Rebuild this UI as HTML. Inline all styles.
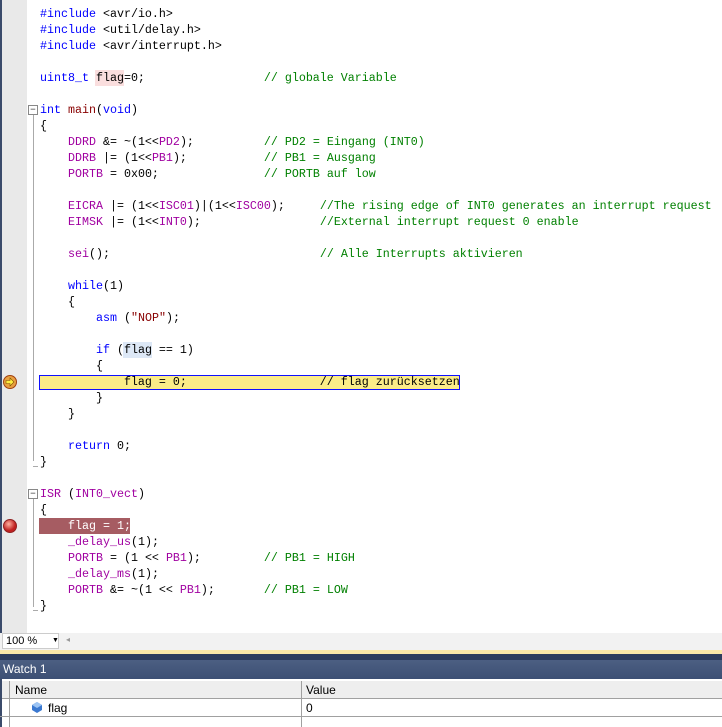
<!DOCTYPE html>
<html><head><style>
body{margin:0;width:722px;height:727px;overflow:hidden;background:#fff;position:relative;font-family:"Liberation Sans",sans-serif}
#gut{position:absolute;left:0;top:0;width:27px;height:633px;background:#e9e9e9;border-left:2px solid #3b4b6b;box-sizing:border-box}
pre{position:absolute;left:40px;top:6px;margin:0;font:11.67px/16px "Liberation Mono",monospace;color:#000;white-space:pre}
.k{color:#0000ff}.m{color:#a000a0}.c{color:#008000}.f{color:#880000}
.hl{position:absolute;left:39px;top:375px;width:419px;height:13px;background:#fbec88;border:1px solid #1010ff}
.bp{position:absolute;left:39px;top:518px;width:91px;height:16px;background:#a65c62}
.fold{position:absolute;width:8px;height:8px;border:1px solid #888;background:#fff;font:9px/8px monospace;text-align:center;color:#444}
.vl{position:absolute;left:33px;width:1px;background:#aaa}
</style></head><body>
<div id="gut"></div>
<div class="hl"></div>
<div class="bp"></div>
<div style="position:absolute;left:95px;top:70px;width:29px;height:16px;background:#fadede"></div>
<div style="position:absolute;left:123px;top:342px;width:29px;height:16px;background:#dde8f6"></div>
<div class="fold" style="left:28px;top:105px">−</div>
<div class="vl" style="top:115px;height:346px"></div>
<div class="vl" style="top:466px;left:33px;height:1px;width:5px"></div>
<div class="fold" style="left:28px;top:489px">−</div>
<div class="vl" style="top:499px;height:108px"></div>
<div class="vl" style="top:610px;height:1px;width:5px"></div>
<svg style="position:absolute;left:2px;top:374px" width="16" height="16"><circle cx="8" cy="8" r="6.5" fill="#e8a040" stroke="#a04010"/><path d="M4 6.5h4V4l4 4-4 4V9.5H4z" fill="#ffee40" stroke="#805000" stroke-width=".6"/></svg>
<svg style="position:absolute;left:2px;top:518px" width="16" height="16"><defs><radialGradient id="g" cx=".4" cy=".35"><stop offset="0" stop-color="#ffb0a0"/><stop offset="1" stop-color="#c02020"/></radialGradient></defs><circle cx="8" cy="8" r="6.5" fill="url(#g)" stroke="#902020"/></svg>
<pre><span class="k">#include</span> &lt;avr/io.h&gt;
<span class="k">#include</span> &lt;util/delay.h&gt;
<span class="k">#include</span> &lt;avr/interrupt.h&gt;

<span class="k">uint8_t</span> flag=0;                 <span class="c">// globale Variable</span>

<span class="k">int</span> <span class="f">main</span>(<span class="k">void</span>)
{
    <span class="m">DDRD</span> &amp;= ~(1&lt;&lt;<span class="m">PD2</span>);          <span class="c">// PD2 = Eingang (INT0)</span>
    <span class="m">DDRB</span> |= (1&lt;&lt;<span class="m">PB1</span>);           <span class="c">// PB1 = Ausgang</span>
    <span class="m">PORTB</span> = 0x00;               <span class="c">// PORTB auf low</span>

    <span class="m">EICRA</span> |= (1&lt;&lt;<span class="m">ISC01</span>)|(1&lt;&lt;<span class="m">ISC00</span>);     <span class="c">//The rising edge of INT0 generates an interrupt request</span>
    <span class="m">EIMSK</span> |= (1&lt;&lt;<span class="m">INT0</span>);                 <span class="c">//External interrupt request 0 enable</span>

    <span class="m">sei</span>();                              <span class="c">// Alle Interrupts aktivieren</span>

    <span class="k">while</span>(1)
    {
        <span class="k">asm</span> (<span class="f">"NOP"</span>);

        <span class="k">if</span> (flag == 1)
        {
            flag = 0;                   // flag zurücksetzen
        }
    }

    <span class="k">return</span> 0;
}

<span class="m">ISR</span> (<span class="m">INT0_vect</span>)
{
<span style="color:#fff">    flag = 1;</span>
    <span class="m">_delay_us</span>(1);
    <span class="m">PORTB</span> = (1 &lt;&lt; <span class="m">PB1</span>);         <span class="c">// PB1 = HIGH</span>
    <span class="m">_delay_ms</span>(1);
    <span class="m">PORTB</span> &amp;= ~(1 &lt;&lt; <span class="m">PB1</span>);       <span class="c">// PB1 = LOW</span>
}</pre>
<div style="position:absolute;left:0;top:633px;width:722px;height:17px;background:#f2f2f2"></div>
<div style="position:absolute;left:2px;top:633px;width:57px;height:16px;background:#fff;border:1px solid #ccc;box-sizing:border-box;font-size:11px;line-height:14px;padding-left:3px">100 %<span style="position:absolute;left:49px;top:0;font-size:7px">▼</span></div>
<div style="position:absolute;left:66px;top:635px;font-size:8px;color:#999">◂</div>
<div style="position:absolute;left:0;top:650px;width:722px;height:4px;background:#fbe8a8"></div>
<div style="position:absolute;left:0;top:654px;width:722px;height:6px;background:#2e3d5e"></div>
<div style="position:absolute;left:0;top:660px;width:722px;height:19px;background:linear-gradient(#4c5f82,#3c4f74);color:#fff;font-size:12px;line-height:19px;padding-left:3px;box-sizing:border-box">Watch 1</div>
<div style="position:absolute;left:0;top:679px;width:722px;height:48px;background:#fff;border-left:2px solid #3b4b6b;box-sizing:border-box"></div>
<div style="position:absolute;left:2px;top:681px;width:720px;height:18px;background:#eee;border-bottom:1px solid #a0a0a0;box-sizing:border-box"></div>
<div style="position:absolute;left:9px;top:681px;width:1px;height:46px;background:#a0a0a0"></div>
<div style="position:absolute;left:301px;top:681px;width:1px;height:46px;background:#a0a0a0"></div>
<div style="position:absolute;left:0;top:716px;width:722px;height:1px;background:#a0a0a0"></div>
<div style="position:absolute;left:15px;top:683px;font-size:12px">Name</div>
<div style="position:absolute;left:306px;top:683px;font-size:12px">Value</div>
<svg style="position:absolute;left:32px;top:702px" width="10" height="11"><path d="M5 0L10 3V8L5 11L0 8V3Z" fill="#3a78d0"/><path d="M5 0L10 3L5 6L0 3Z" fill="#9cc4f4"/></svg>
<div style="position:absolute;left:48px;top:701px;font-size:12px">flag</div>
<div style="position:absolute;left:306px;top:701px;font-size:12px">0</div>
</body></html>
